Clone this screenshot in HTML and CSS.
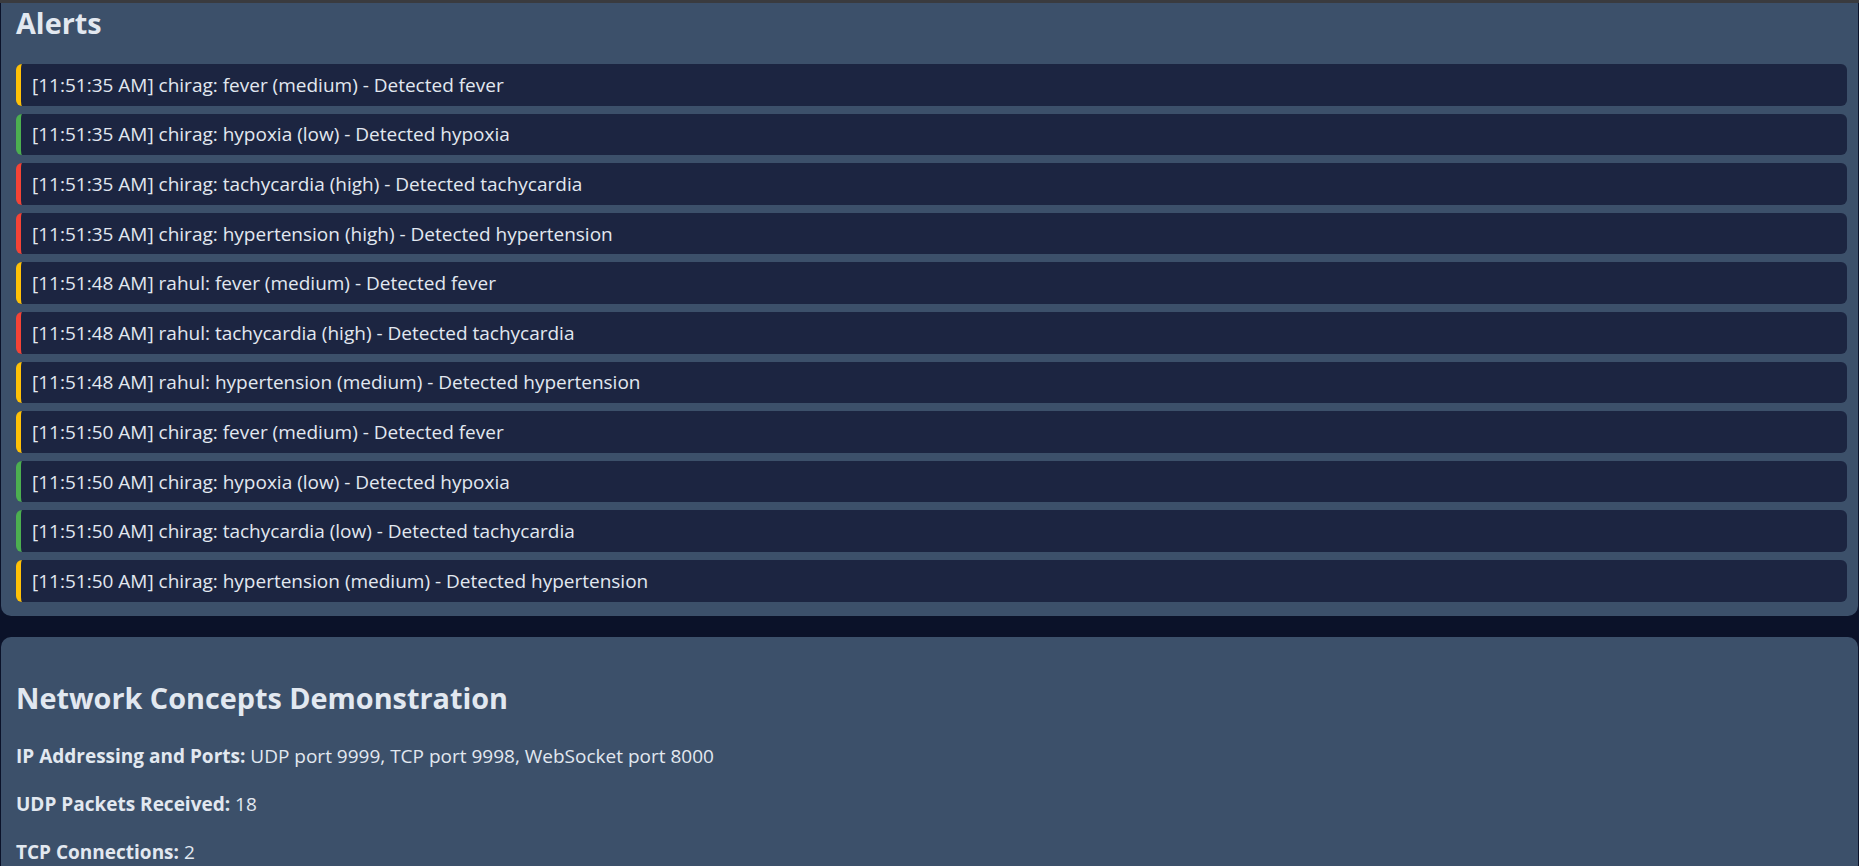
FILE: index.html
```html
<!DOCTYPE html>
<html lang="en">
<head>
<meta charset="utf-8">
<title>Dashboard</title>
<link rel="stylesheet" href="styles.css">
</head>
<body>
<div class="topbar"></div>
<main class="page">
  <section class="panel alerts-panel">
    <h2 class="panel-title">Alerts</h2>
    <ul class="alert-list">
      <li class="alert alert-medium">[11:51:35 AM] chirag: fever (medium) - Detected fever</li>
      <li class="alert alert-low">[11:51:35 AM] chirag: hypoxia (low) - Detected hypoxia</li>
      <li class="alert alert-high">[11:51:35 AM] chirag: tachycardia (high) - Detected tachycardia</li>
      <li class="alert alert-high">[11:51:35 AM] chirag: hypertension (high) - Detected hypertension</li>
      <li class="alert alert-medium">[11:51:48 AM] rahul: fever (medium) - Detected fever</li>
      <li class="alert alert-high">[11:51:48 AM] rahul: tachycardia (high) - Detected tachycardia</li>
      <li class="alert alert-medium">[11:51:48 AM] rahul: hypertension (medium) - Detected hypertension</li>
      <li class="alert alert-medium">[11:51:50 AM] chirag: fever (medium) - Detected fever</li>
      <li class="alert alert-low">[11:51:50 AM] chirag: hypoxia (low) - Detected hypoxia</li>
      <li class="alert alert-low">[11:51:50 AM] chirag: tachycardia (low) - Detected tachycardia</li>
      <li class="alert alert-medium">[11:51:50 AM] chirag: hypertension (medium) - Detected hypertension</li>
    </ul>
  </section>
  <section class="panel network-panel">
    <h2 class="panel-title network-title">Network Concepts Demonstration</h2>
    <p class="info"><strong>IP Addressing and Ports:</strong> UDP port 9999, TCP port 9998, WebSocket port 8000</p>
    <p class="info"><strong>UDP Packets Received:</strong> 18</p>
    <p class="info"><strong>TCP Connections:</strong> 2</p>
  </section>
</main>
</body>
</html>
```
FILE: styles.css
```css
html, body {
  margin: 0;
  padding: 0;
  height: 100%;
  overflow: hidden;
}
body {
  background: #0b1229;
  color: #e2e8f0;
  font-family: "Open Sans", "Noto Sans", sans-serif;
}
.topbar {
  height: 3px;
  background: #3a3b3f;
}
.page {
  display: flex;
  flex-direction: column;
  gap: 21px;
  padding-left: 1px;
  padding-right: 1px;
}
.panel {
  background: #3c506a;
  border-radius: 10px;
  padding: 0 11px 14px 15px;
}
.alerts-panel {
  border-top-left-radius: 0;
  border-top-right-radius: 0;
}
.panel-title {
  margin: 0;
  font-size: 28.8px;
  font-weight: 700;
  line-height: 30px;
  color: #e2e8f0;
}
.alerts-panel .panel-title {
  padding-top: 5px;
  height: 61px;
  box-sizing: border-box;
}
.alert-list {
  list-style: none;
  margin: 0;
  padding: 0;
  display: flex;
  flex-direction: column;
  gap: 8px;
}
.alert {
  height: 41.6px;
  box-sizing: border-box;
  display: flex;
  align-items: center;
  background: #1c2541;
  border-radius: 6px;
  border-left: 5px solid #ffc107;
  padding-left: 11px;
  font-size: 19px;
  color: #e2e8f0;
}
.alert-medium { border-left-color: #ffc107; }
.alert-low { border-left-color: #4caf50; }
.alert-high { border-left-color: #f44336; }
.network-panel {
  padding-top: 46px;
  min-height: 400px;
}
.network-title {
  margin-bottom: 29px;
}
.info {
  margin: 0 0 19px;
  font-size: 19px;
  line-height: 29px;
}
.info strong {
  font-weight: 700;
}
```
